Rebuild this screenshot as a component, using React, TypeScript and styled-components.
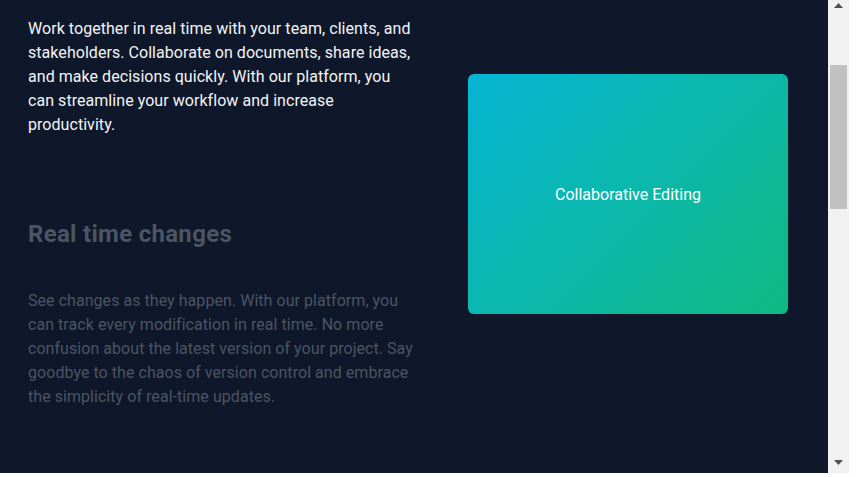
import React from "react";
import styled, { createGlobalStyle } from "styled-components";

const GlobalStyle = createGlobalStyle`
  html, body {
    margin: 0;
    padding: 0;
    background: #ffffff;
    overflow: hidden;
  }
  * { box-sizing: border-box; }
`;

const Frame = styled.div`
  width: 849px;
  height: 473px;
  display: flex;
`;

const Viewport = styled.main`
  flex: 1;
  background: #0f172a;
  overflow: hidden;
  font-family: Roboto, "Liberation Sans", sans-serif;
`;

const Features = styled.section`
  display: grid;
  grid-template-columns: 386px 320px;
  column-gap: 54px;
  padding-left: 28px;
  align-items: start;
`;

const TextColumn = styled.div`
  display: flex;
  flex-direction: column;
  padding-top: 17px;
`;

const Feature = styled.article<{ $active?: boolean }>`
  display: flex;
  flex-direction: column;
  color: ${(p) => (p.$active ? "#f3f4f6" : "#4b5563")};
  & + & {
    margin-top: 81px;
  }
`;

const FeatureTitle = styled.h3`
  margin: 0 0 39px;
  font-size: 24px;
  line-height: 32px;
  font-weight: 700;
  letter-spacing: 0.3px;
`;

const FeatureText = styled.p`
  margin: 0;
  font-size: 16px;
  line-height: 24px;
  letter-spacing: 0.05px;
`;

const Visual = styled.div`
  margin-top: 74px;
  width: 320px;
  height: 240px;
  padding-top: 2px;
  border-radius: 6px;
  background: linear-gradient(135deg, #06b6d4 0%, #10b981 100%);
  display: flex;
  align-items: center;
  justify-content: center;
  color: #ffffff;
  font-size: 16px;
  line-height: 24px;
`;

const Scrollbar = styled.div`
  width: 21px;
  height: 100%;
  background: #f1f1f1;
  display: flex;
  flex-direction: column;
`;

const ScrollButton = styled.div<{ $down?: boolean }>`
  height: 17px;
  display: flex;
  justify-content: center;
  align-items: ${(p) => (p.$down ? "flex-end" : "flex-start")};
  padding: ${(p) => (p.$down ? "0 0 8px" : "3px 0 0")};
  svg { display: block; }
`;

const Track = styled.div`
  flex: 1;
  padding: 48px 2px 0;
`;

const Thumb = styled.div`
  height: 144px;
  background: #c1c1c1;
`;

const Arrow = ({ down }: { down?: boolean }) => (
  <svg width="9" height="5" viewBox="0 0 9 5">
    <polygon
      points={down ? "0,0 9,0 4.5,5" : "0,5 4.5,0 9,5"}
      fill="#505050"
    />
  </svg>
);

export default function App() {
  return (
    <>
      <GlobalStyle />
      <Frame>
        <Viewport>
          <Features>
            <TextColumn>
              <Feature $active>
                <FeatureText>
                  Work together in real time with your team, clients, and
                  stakeholders. Collaborate on documents, share ideas, and make
                  decisions quickly. With our platform, you can streamline your
                  workflow and increase productivity.
                </FeatureText>
              </Feature>
              <Feature>
                <FeatureTitle>Real time changes</FeatureTitle>
                <FeatureText>
                  See changes as they happen. With our platform, you can track
                  every modification in real time. No more confusion about the
                  latest version of your project. Say goodbye to the chaos of
                  version control and embrace the simplicity of real-time
                  updates.
                </FeatureText>
              </Feature>
            </TextColumn>
            <Visual>Collaborative Editing</Visual>
          </Features>
        </Viewport>
        <Scrollbar>
          <ScrollButton>
            <Arrow />
          </ScrollButton>
          <Track>
            <Thumb />
          </Track>
          <ScrollButton $down>
            <Arrow down />
          </ScrollButton>
        </Scrollbar>
      </Frame>
    </>
  );
}
